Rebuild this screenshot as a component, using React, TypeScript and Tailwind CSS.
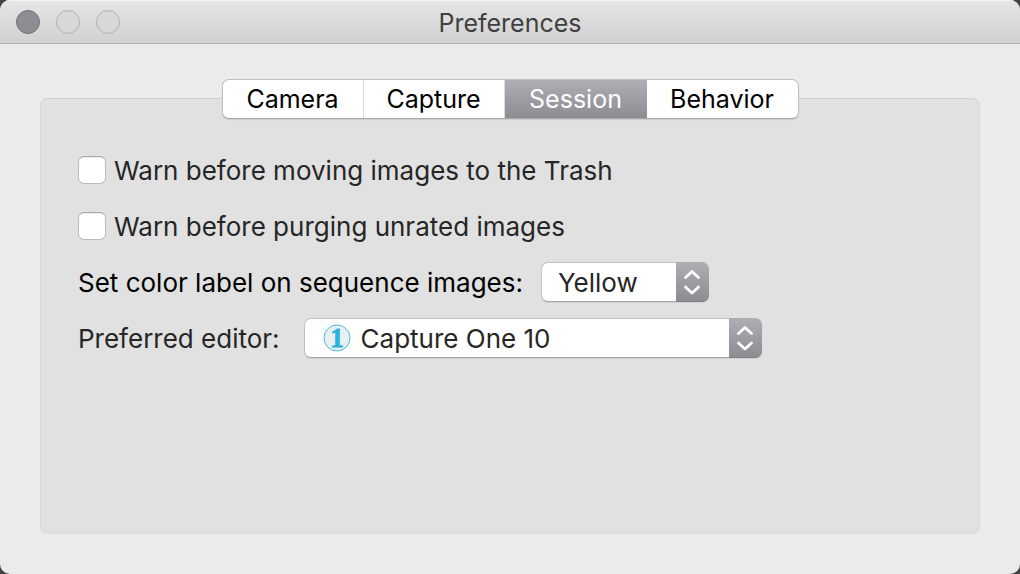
import React, { useState } from "react";
import clsx from "clsx";

interface CheckOptionProps {
  id: string;
  label: string;
}

interface PopupSelectProps {
  id: string;
  options: string[];
  className: string;
  selectClassName: string;
  icon?: React.ReactNode;
}

const tabs = [
  { label: "Camera", width: "w-[141px]" },
  { label: "Capture", width: "w-[141px]" },
  { label: "Session", width: "w-[142px]" },
  { label: "Behavior", width: "w-[151px]" },
];

const CheckOption: React.FC<CheckOptionProps> = ({ id, label }) => (
  <div className="flex h-10 items-center gap-2">
    <input
      id={id}
      type="checkbox"
      className="h-7 w-7 appearance-none rounded-md border border-[#bcbcbc] border-t-[#a6a6a6] bg-white shadow-[inset_0_1px_1px_#ececec] checked:bg-[#8e8d93]"
    />
    <label htmlFor={id} className="pt-0.5 text-[#262626]">
      {label}
    </label>
  </div>
);

const PopupSelect: React.FC<PopupSelectProps> = ({
  id,
  options,
  className,
  selectClassName,
  icon,
}) => (
  <div className={clsx("relative h-10", className)}>
    <select
      id={id}
      className={clsx(
        "h-full w-full appearance-none rounded-[7px] border border-[#c3c3c3] border-b-[#a9a9a9] bg-white pt-px pr-9 text-[#262626] shadow-[0_1px_1px_#cfcfcf]",
        selectClassName
      )}
    >
      {options.map((option) => (
        <option key={option}>{option}</option>
      ))}
    </select>
    {icon}
    <span className="pointer-events-none absolute inset-y-0 right-0 flex w-[33px] items-center justify-center rounded-r-[7px] border-b border-[#818086] bg-linear-to-b from-[#afaeb4] to-[#8d8c92]">
      <svg
        width="18"
        height="26"
        viewBox="0 0 18 26"
        fill="none"
        stroke="white"
        strokeWidth="2.8"
        strokeLinecap="round"
        strokeLinejoin="round"
      >
        <path d="M2.5 8.5 9 2.5l6.5 6M2.5 18 9 24l6.5-6" />
      </svg>
    </span>
  </div>
);

const EditorIcon: React.FC = () => (
  <svg
    className="pointer-events-none absolute top-[6px] left-[19px]"
    width="28"
    height="28"
    viewBox="0 0 28 28"
    aria-hidden="true"
  >
    <circle cx="14" cy="14" r="13" fill="#e9f0f2" stroke="#45bddf" />
    <text
      x="14"
      y="23"
      textAnchor="middle"
      fill="#2bb3df"
      stroke="#2bb3df"
      strokeWidth="0.8"
      fontFamily="Liberation Serif, serif"
      fontWeight="700"
      fontSize="27"
    >
      1
    </text>
  </svg>
);

const App: React.FC = () => {
  const [activeTab, setActiveTab] = useState("Session");

  return (
    <div className="min-h-screen bg-[#444444] font-['Inter',sans-serif] text-[25px] leading-8">
      <div className="flex min-h-screen flex-col overflow-hidden rounded-[10px] bg-[#ebebeb]">
        <header className="relative flex h-11 items-center justify-center border-b border-[#b1b1b1] bg-linear-to-b from-[#e6e6e6] to-[#d1d1d1] shadow-[inset_0_1px_0_#f4f4f4]">
          <div className="absolute left-4 flex gap-4">
            <button
              aria-label="Close"
              className="h-6 w-6 rounded-full border border-[#737278] bg-[#8e8d93]"
            />
            <button
              aria-label="Minimize"
              className="h-6 w-6 rounded-full border border-[#b1b1b1] bg-[#d8d8d8]"
            />
            <button
              aria-label="Zoom"
              className="h-6 w-6 rounded-full border border-[#b1b1b1] bg-[#d8d8d8]"
            />
          </div>
          <h1 className="pt-0.5 text-[#404040]">Preferences</h1>
        </header>

        <main className="flex flex-1 flex-col px-10 pt-[35px] pb-10">
          <div
            role="tablist"
            className="z-10 -mb-[21px] flex h-10 self-center overflow-hidden rounded-[7px] border border-[#c0c0c0] border-b-[#a9a9a9] bg-white shadow-[0_1px_1px_#cccccc]"
          >
            {tabs.map((tab) => (
              <button
                key={tab.label}
                role="tab"
                aria-selected={activeTab === tab.label}
                onClick={() => setActiveTab(tab.label)}
                className={clsx(
                  "border-r border-[#dcdcdc] last:border-r-0",
                  tab.width,
                  activeTab === tab.label
                    ? "border-r-0 bg-linear-to-b from-[#afaeb4] to-[#8d8c92] text-white"
                    : "text-black"
                )}
              >
                {tab.label}
              </button>
            ))}
          </div>

          <section className="flex flex-1 flex-col gap-4 rounded-lg border border-[#d8d8d8] border-t-[#cfcfcf] bg-[#e1e1e1] px-[37px] pt-[51px] text-[26px] leading-8">
            <CheckOption
              id="warn-trash"
              label="Warn before moving images to the Trash"
            />
            <CheckOption
              id="warn-purge"
              label="Warn before purging unrated images"
            />
            <div className="flex h-10 items-center gap-[18px]">
              <label htmlFor="color-label" className="pt-0.5 text-black">
                Set color label on sequence images:
              </label>
              <PopupSelect
                id="color-label"
                options={["Yellow", "Red", "Green", "Blue"]}
                className="w-[168px]"
                selectClassName="pl-4"
              />
            </div>
            <div className="flex h-10 items-center gap-6">
              <label htmlFor="editor" className="pt-0.5 text-[#262626]">
                Preferred editor:
              </label>
              <PopupSelect
                id="editor"
                options={["Capture One 10"]}
                className="w-[458px]"
                selectClassName="pl-14"
                icon={<EditorIcon />}
              />
            </div>
          </section>
        </main>
      </div>
    </div>
  );
};

export default App;
